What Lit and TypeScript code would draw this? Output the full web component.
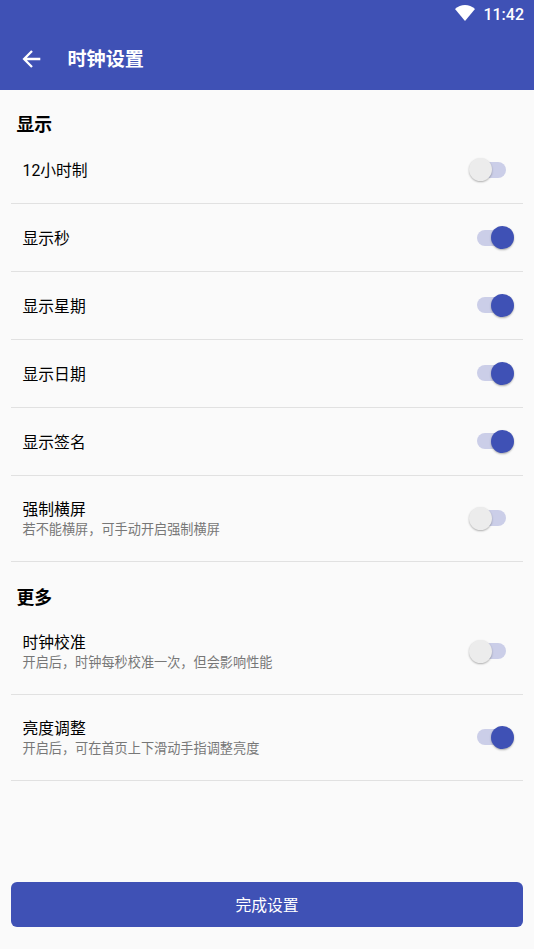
import { LitElement, html, css, nothing } from "lit";
import { customElement, property } from "lit/decorators.js";
import { classMap } from "lit/directives/class-map.js";

interface Setting {
  title: string;
  note?: string;
  on: boolean;
}

interface Section {
  title: string;
  items: Setting[];
}

const SECTIONS: Section[] = [
  {
    title: "显示",
    items: [
      { title: "12小时制", on: false },
      { title: "显示秒", on: true },
      { title: "显示星期", on: true },
      { title: "显示日期", on: true },
      { title: "显示签名", on: true },
      { title: "强制横屏", note: "若不能横屏，可手动开启强制横屏", on: false },
    ],
  },
  {
    title: "更多",
    items: [
      { title: "时钟校准", note: "开启后，时钟每秒校准一次，但会影响性能", on: false },
      { title: "亮度调整", note: "开启后，可在首页上下滑动手指调整亮度", on: true },
    ],
  },
];

@customElement("toggle-switch")
export class ToggleSwitch extends LitElement {
  @property({ type: Boolean }) on = false;

  static styles = css`
    :host {
      display: block;
      flex: none;
    }
    .switch {
      display: grid;
      grid-template-columns: 45px;
      align-items: center;
      height: 24px;
    }
    .track,
    .thumb {
      grid-area: 1 / 1;
    }
    .track {
      height: 16px;
      margin: 0 8px;
      border-radius: 8px;
      background: #cbcee8;
    }
    .thumb {
      width: 23px;
      height: 23px;
      border-radius: 50%;
      background: #ececec;
      box-shadow: 0 1px 2px rgba(0, 0, 0, 0.3);
    }
    .on .thumb {
      justify-self: end;
      background: #3f51b5;
    }
  `;

  render() {
    return html`<div class=${classMap({ switch: true, on: this.on })}>
      <div class="track"></div>
      <div class="thumb"></div>
    </div>`;
  }
}

@customElement("app-root")
export class AppRoot extends LitElement {
  static styles = css`
    :host {
      display: flex;
      flex-direction: column;
      box-sizing: border-box;
      height: 949px;
      background: #fafafa;
      color: #000;
      font-family: Roboto, "Noto Sans CJK SC", sans-serif;
      overflow: hidden;
    }
    .status {
      flex: none;
      display: flex;
      justify-content: flex-end;
      align-items: center;
      gap: 8px;
      height: 28px;
      padding-right: 10px;
      background: #3f51b5;
      color: #fff;
      font-size: 16px;
      font-weight: 500;
      line-height: 28px;
    }
    .time {
      padding-top: 2px;
      line-height: 26px;
    }
    .wifi {
      width: 20px;
      height: 16px;
      margin-bottom: 2px;
    }
    .bar {
      flex: none;
      display: flex;
      align-items: center;
      height: 62px;
      padding-left: 22px;
      background: #3f51b5;
      color: #fff;
    }
    .back {
      width: 19px;
      height: 18px;
      margin-right: 26.5px;
    }
    .heading {
      padding-top: 2px;
      font-size: 19.1px;
      font-weight: 700;
      line-height: 28px;
    }
    .content {
      flex: 1;
      padding: 0 11px;
    }
    .section {
      box-sizing: border-box;
      height: 46.2px;
      padding: 22px 0 0 5.5px;
      font-size: 17.8px;
      font-weight: 700;
      line-height: 26px;
    }
    .section:not(:first-child) {
      height: 46.6px;
      padding-top: 23.2px;
    }
    .row {
      box-sizing: border-box;
      display: flex;
      align-items: center;
      justify-content: space-between;
      height: 67.9px;
      padding: 0 9px 0 11.5px;
      border-bottom: 1px solid #e1e1e1;
    }
    .tall {
      height: 86.3px;
    }
    .label {
      padding-top: 2.8px;
    }
    .title {
      font-size: 15.8px;
      line-height: 20px;
    }
    .note {
      font-size: 13.17px;
      line-height: 19px;
      color: #777;
    }
    .done {
      flex: none;
      margin: 0 11px 22px;
      height: 45px;
      border: 0;
      border-radius: 6px;
      background: #3f51b5;
      color: #fff;
      font: 15.8px/43px Roboto, "Noto Sans CJK SC", sans-serif;
      padding: 2px 0 0;
    }
  `;

  private renderRow(item: Setting) {
    return html`<div class=${classMap({ row: true, tall: !!item.note })}>
      <div class="label">
        <div class="title">${item.title}</div>
        ${item.note ? html`<div class="note">${item.note}</div>` : nothing}
      </div>
      <toggle-switch ?on=${item.on}></toggle-switch>
    </div>`;
  }

  render() {
    return html`
      <div class="status">
        <svg class="wifi" viewBox="0 0 20 16">
          <path d="M10 16 L0 4 Q4.500 0 10 0 T20 4 Z" fill="#fff" />
        </svg>
        <span class="time">11:42</span>
      </div>
      <div class="bar">
        <svg class="back" viewBox="0 0 19 18" fill="none" stroke="#fff" stroke-width="2.3">
          <path d="M18.300 9 H2.400 M10 1 L2.100 9 L10 17" />
        </svg>
        <span class="heading">时钟设置</span>
      </div>
      <div class="content">
        ${SECTIONS.map(
          (s) => html`<div class="section">${s.title}</div>
            ${s.items.map((i) => this.renderRow(i))}`
        )}
      </div>
      <button class="done">完成设置</button>
    `;
  }
}
